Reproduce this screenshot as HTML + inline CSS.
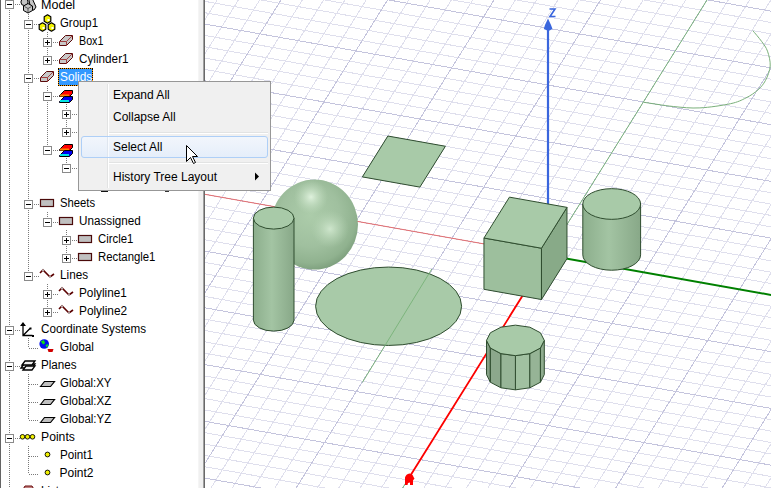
<!DOCTYPE html>
<html><head><meta charset="utf-8"><style>
html,body{margin:0;padding:0;width:771px;height:488px;overflow:hidden;background:#fff}
.t{position:absolute;transform-origin:0 0;font-family:"Liberation Sans",sans-serif;font-size:12px;line-height:18px;color:#000;white-space:nowrap}
.m{position:absolute;left:34px;font-family:"Liberation Sans",sans-serif;font-size:12px;color:#000;white-space:nowrap;line-height:14px}
</style></head><body>
<svg style="position:absolute;left:0;top:0" width="771" height="488" viewBox="0 0 771 488">
<defs><radialGradient id="sph" cx="0.45" cy="0.4" r="0.62"><stop offset="0" stop-color="#acccaa"/><stop offset="0.55" stop-color="#a0c09f"/><stop offset="0.85" stop-color="#90b28f"/><stop offset="1" stop-color="#7c9e7c"/></radialGradient><radialGradient id="sph1" gradientUnits="userSpaceOnUse" cx="311" cy="197" r="17"><stop offset="0" stop-color="#e2f4e0" stop-opacity="0.95"/><stop offset="1" stop-color="#c0dcbe" stop-opacity="0"/></radialGradient><radialGradient id="sph2" gradientUnits="userSpaceOnUse" cx="330" cy="229" r="19"><stop offset="0" stop-color="#d6ecd4" stop-opacity="0.85"/><stop offset="1" stop-color="#b8d6b6" stop-opacity="0"/></radialGradient><linearGradient id="cylg1" x1="0" x2="1" y1="0" y2="0"><stop offset="0" stop-color="#8cae8c"/><stop offset="0.45" stop-color="#a3c4a3"/><stop offset="1" stop-color="#88a888"/></linearGradient><linearGradient id="cylg2" x1="0" x2="1" y1="0" y2="0"><stop offset="0" stop-color="#8cae8c"/><stop offset="0.45" stop-color="#a3c4a3"/><stop offset="1" stop-color="#88a888"/></linearGradient>
<clipPath id="vc"><rect x="205" y="0" width="566" height="488"/></clipPath></defs>
<g clip-path="url(#vc)" shape-rendering="crispEdges"><path d="M240.5 -105.81L1084.2 44.1M234.12 -95.59L1077.82 54.31M221.38 -75.16L1065.08 74.75M215 -64.94L1058.7 84.97M208.63 -54.72L1052.33 95.19M202.26 -44.5L1045.96 105.41M189.51 -24.07L1033.21 125.84M183.14 -13.85L1026.84 136.06M176.77 -3.63L1020.47 146.28M170.39 6.59L1014.09 156.5M157.65 27.02L1001.35 176.93M151.27 37.24L994.97 187.15M144.9 47.46L988.6 197.37M138.53 57.68L982.23 207.59M125.78 78.11L969.48 228.02M119.41 88.33L963.11 238.24M113.04 98.55L956.74 248.46M106.66 108.77L950.36 258.68M93.92 129.2L937.62 279.11M87.54 139.42L931.24 289.33M81.17 149.64L924.87 299.55M74.8 159.86L918.5 309.76M62.05 180.29L905.75 330.2M55.68 190.51L899.38 340.42M49.31 200.73L893.01 350.64M42.93 210.95L886.63 360.86M30.19 231.38L873.89 381.29M23.81 241.6L867.51 391.51M17.44 251.82L861.14 401.73M11.07 262.04L854.77 411.94M-1.68 282.47L842.02 432.38M-8.05 292.69L835.65 442.6M-14.42 302.91L829.28 452.82M-20.8 313.13L822.9 463.04M-33.54 333.56L810.16 483.47M-39.92 343.78L803.78 493.69M-46.29 354L797.41 503.91M-52.66 364.22L791.04 514.12M-65.41 384.65L778.29 534.56M-71.78 394.87L771.92 544.78M-78.15 405.09L765.55 555M-84.53 415.31L759.17 565.21M-97.27 435.74L746.43 585.65M-103.65 445.96L740.05 595.87M259.67 -102.4L-84.47 449.37M278.85 -99L-65.3 452.77M298.02 -95.59L-46.12 456.18M317.2 -92.18L-26.95 459.59M355.55 -85.37L11.4 466.4M374.72 -81.96L30.58 469.81M393.9 -78.56L49.75 473.22M413.07 -75.15L68.93 476.62M451.42 -68.33L107.28 483.44M470.6 -64.93L126.45 486.84M489.77 -61.52L145.63 490.25M508.95 -58.11L164.8 493.66M547.3 -51.3L203.15 500.47M566.47 -47.89L222.33 503.88M585.65 -44.49L241.5 507.29M604.82 -41.08L260.68 510.69M643.17 -34.26L299.03 517.51M662.35 -30.86L318.2 520.91M681.52 -27.45L337.38 524.32M700.7 -24.04L356.55 527.73M739.05 -17.23L394.9 534.54M758.22 -13.82L414.08 537.95M777.4 -10.42L433.25 541.36M796.57 -7.01L452.43 544.76M834.92 -0.19L490.78 551.58M854.1 3.21L509.95 554.99M873.27 6.62L529.13 558.39M892.45 10.03L548.3 561.8M930.8 16.84L586.65 568.61M949.97 20.25L605.83 572.02M969.15 23.65L625 575.43M988.32 27.06L644.18 578.83M1026.67 33.88L682.53 585.65M1045.85 37.28L701.7 589.05M1065.02 40.69L720.88 592.46M1084.2 44.1L740.05 595.87" stroke="#dfdfed" stroke-width="1" fill="none"/><path d="M227.75 -85.37L1071.45 64.53M195.88 -34.29L1039.59 115.62M164.02 16.8L1007.72 166.71M132.15 67.89L975.86 217.8M100.29 118.98L943.99 268.89M68.42 170.07L912.12 319.98M36.56 221.17L880.26 371.07M4.69 272.25L848.39 422.16M-27.17 323.34L816.53 473.25M-59.04 374.44L784.66 524.34M-90.9 425.52L752.8 575.43M240.5 -105.81L-103.65 445.96M336.37 -88.78L-7.77 463M432.25 -71.74L88.1 480.03M528.12 -54.71L183.98 497.07M624 -37.67L279.85 514.1M719.87 -20.64L375.73 531.14M815.75 -3.6L471.6 548.17M911.62 13.43L567.48 565.21M1007.5 30.47L663.35 582.24" stroke="#c4c4dd" stroke-width="1" fill="none"/></g>
<g clip-path="url(#vc)"><line x1="-27.45" y1="153.04" x2="547.8" y2="255.25" stroke="#e87070" stroke-width="1"/><line x1="738.99" y1="-51.29" x2="388.47" y2="510.7" stroke="#80b880" stroke-width="1"/><line x1="547.8" y1="255.25" x2="931.3" y2="323.39" stroke="#008000" stroke-width="2"/><line x1="547.8" y1="255.25" x2="410.78" y2="474.94" stroke="#ff0000" stroke-width="1.8"/><path d="M405 477.5 Q406 474 409.5 473.5 Q413 474 413.5 477 L414.5 478.5 L413 480.5 L413 485 L410 485 L410 482.5 L408 483 L407.5 485 L405 485 Z" fill="#ff0000"/><line x1="548" y1="255" x2="548" y2="28" stroke="#3a66dd" stroke-width="2.2"/><path d="M548 18.5 L551 25 L552.5 29 L548.5 31 L543.8 29 L545 25 Z" fill="#3a66dd"/><path d="M549.5 9 H555 L550 16.5 H555.5" stroke="#3a66dd" stroke-width="1.6" fill="none"/><path d="M644 102.3C648.88 103 663.98 105.57 673.3 106.5C682.62 107.43 690.37 108.37 699.9 107.9C709.43 107.43 722.82 105.37 730.5 103.7C738.18 102.03 741.47 100.17 746 97.9C750.53 95.63 754.45 93.02 757.7 90.1C760.95 87.18 763.42 84.42 765.5 80.4C767.58 76.38 769.87 70.87 770.2 66C770.53 61.13 768.93 55.3 767.5 51.2C766.07 47.1 764.03 44.82 761.6 41.4C759.17 37.98 754.35 32.48 752.9 30.7" stroke="#7ab07a" stroke-width="1" fill="none"/><polygon points="387.86,136.03 445.38,146.25 419.89,187.12 362.37,176.9" fill="#a8caa8" stroke="#2f4d2f" stroke-width="1"/><ellipse cx="388.6" cy="306.25" rx="73" ry="39.2" fill="#a8caa8" stroke="#2f4d2f" stroke-width="1"/><line x1="431.8" y1="269" x2="362.4" y2="382.4" stroke="#7db57d" stroke-width="1"/><ellipse cx="314.5" cy="224.6" rx="43.5" ry="45" fill="url(#sph)"/><ellipse cx="314.5" cy="224.6" rx="43.5" ry="45" fill="url(#sph1)"/><ellipse cx="314.5" cy="224.6" rx="43.5" ry="45" fill="url(#sph2)"/><path d="M253.4 218.1 V320.1 A20.3 11 0 0 0 294 320.1 V218.1 Z" fill="url(#cylg1)" stroke="#2f4d2f" stroke-width="1"/><ellipse cx="273.7" cy="218.1" rx="20.3" ry="11" fill="#a8caa8" stroke="#2f4d2f" stroke-width="1"/><polygon points="483.96,238.01 541.48,248.23 541.48,299.53 483.96,289.31" fill="#9dbf9d" stroke="#2f4d2f" stroke-width="1"/><polygon points="541.48,248.23 566.97,207.36 566.97,258.66 541.48,299.53" fill="#88aa88" stroke="#2f4d2f" stroke-width="1"/><polygon points="509.45,197.14 566.97,207.36 541.48,248.23 483.96,238.01" fill="#a8caa8" stroke="#2f4d2f" stroke-width="1"/><path d="M582.8 204 V254.9 A28.9 15.35 0 0 0 640.6 254.9 V204 Z" fill="url(#cylg2)" stroke="#2f4d2f" stroke-width="1"/><ellipse cx="611.7" cy="204" rx="28.9" ry="15.35" fill="#a8caa8" stroke="#2f4d2f" stroke-width="1"/><polygon points="515.4,355.65 529.85,353.61 529.85,387.81 515.4,389.85" fill="#a1c1a1" stroke="#2f4d2f" stroke-width="1"/><polygon points="529.85,353.61 540.43,348.02 540.43,382.22 529.85,387.81" fill="#96b496" stroke="#2f4d2f" stroke-width="1"/><polygon points="540.43,348.02 544.3,340.4 544.3,374.6 540.43,382.22" fill="#8fac8f" stroke="#2f4d2f" stroke-width="1"/><polygon points="486.5,340.4 490.37,348.02 490.37,382.22 486.5,374.6" fill="#85a085" stroke="#2f4d2f" stroke-width="1"/><polygon points="490.37,348.02 500.95,353.61 500.95,387.81 490.37,382.22" fill="#8ca88c" stroke="#2f4d2f" stroke-width="1"/><polygon points="500.95,353.61 515.4,355.65 515.4,389.85 500.95,387.81" fill="#97b597" stroke="#2f4d2f" stroke-width="1"/><polygon points="515.4,355.65 529.85,353.61 540.43,348.02 544.3,340.4 540.43,332.77 529.85,327.19 515.4,325.15 500.95,327.19 490.37,332.77 486.5,340.4 490.37,348.02 500.95,353.61" fill="#a8caa8" stroke="#2f4d2f" stroke-width="1"/></g>
<rect x="0" y="0" width="205" height="488" fill="#fff"/>
<rect x="0" y="0" width="1" height="488" fill="#646464"/>
<rect x="198" y="0" width="1" height="488" fill="#f5f5f5"/>
<rect x="199" y="0" width="4" height="488" fill="#f0f0f0"/>
<rect x="203" y="0" width="1" height="488" fill="#a0a0a0"/>
<rect x="204" y="0" width="1" height="488" fill="#696969"/>
<g><line x1="9.5" y1="10" x2="9.5" y2="488" stroke="#7a7a7a" stroke-width="1" stroke-dasharray="1 1"/><line x1="28.5" y1="12" x2="28.5" y2="276" stroke="#7a7a7a" stroke-width="1" stroke-dasharray="1 1"/><line x1="47.5" y1="32" x2="47.5" y2="60" stroke="#7a7a7a" stroke-width="1" stroke-dasharray="1 1"/><line x1="47.5" y1="86" x2="47.5" y2="150" stroke="#7a7a7a" stroke-width="1" stroke-dasharray="1 1"/><line x1="66.5" y1="104" x2="66.5" y2="132" stroke="#7a7a7a" stroke-width="1" stroke-dasharray="1 1"/><line x1="66.5" y1="158" x2="66.5" y2="168" stroke="#7a7a7a" stroke-width="1" stroke-dasharray="1 1"/><line x1="85.5" y1="176" x2="85.5" y2="186" stroke="#7a7a7a" stroke-width="1" stroke-dasharray="1 1"/><line x1="47.5" y1="212" x2="47.5" y2="222" stroke="#7a7a7a" stroke-width="1" stroke-dasharray="1 1"/><line x1="66.5" y1="230" x2="66.5" y2="258" stroke="#7a7a7a" stroke-width="1" stroke-dasharray="1 1"/><line x1="47.5" y1="284" x2="47.5" y2="312" stroke="#7a7a7a" stroke-width="1" stroke-dasharray="1 1"/><line x1="28.5" y1="338" x2="28.5" y2="348" stroke="#7a7a7a" stroke-width="1" stroke-dasharray="1 1"/><line x1="28.5" y1="374" x2="28.5" y2="420" stroke="#7a7a7a" stroke-width="1" stroke-dasharray="1 1"/><line x1="28.5" y1="446" x2="28.5" y2="474" stroke="#7a7a7a" stroke-width="1" stroke-dasharray="1 1"/><line x1="15" y1="4.5" x2="20" y2="4.5" stroke="#7a7a7a" stroke-width="1" stroke-dasharray="1 1"/><line x1="34" y1="24.5" x2="39" y2="24.5" stroke="#7a7a7a" stroke-width="1" stroke-dasharray="1 1"/><line x1="53" y1="42.5" x2="58" y2="42.5" stroke="#7a7a7a" stroke-width="1" stroke-dasharray="1 1"/><line x1="53" y1="60.5" x2="58" y2="60.5" stroke="#7a7a7a" stroke-width="1" stroke-dasharray="1 1"/><line x1="34" y1="78.5" x2="39" y2="78.5" stroke="#7a7a7a" stroke-width="1" stroke-dasharray="1 1"/><line x1="53" y1="96.5" x2="58" y2="96.5" stroke="#7a7a7a" stroke-width="1" stroke-dasharray="1 1"/><line x1="72" y1="114.5" x2="77" y2="114.5" stroke="#7a7a7a" stroke-width="1" stroke-dasharray="1 1"/><line x1="72" y1="132.5" x2="77" y2="132.5" stroke="#7a7a7a" stroke-width="1" stroke-dasharray="1 1"/><line x1="53" y1="150.5" x2="58" y2="150.5" stroke="#7a7a7a" stroke-width="1" stroke-dasharray="1 1"/><line x1="72" y1="168.5" x2="77" y2="168.5" stroke="#7a7a7a" stroke-width="1" stroke-dasharray="1 1"/><line x1="86" y1="186.5" x2="96" y2="186.5" stroke="#7a7a7a" stroke-width="1" stroke-dasharray="1 1"/><line x1="34" y1="204.5" x2="39" y2="204.5" stroke="#7a7a7a" stroke-width="1" stroke-dasharray="1 1"/><line x1="53" y1="222.5" x2="58" y2="222.5" stroke="#7a7a7a" stroke-width="1" stroke-dasharray="1 1"/><line x1="72" y1="240.5" x2="77" y2="240.5" stroke="#7a7a7a" stroke-width="1" stroke-dasharray="1 1"/><line x1="72" y1="258.5" x2="77" y2="258.5" stroke="#7a7a7a" stroke-width="1" stroke-dasharray="1 1"/><line x1="34" y1="276.5" x2="39" y2="276.5" stroke="#7a7a7a" stroke-width="1" stroke-dasharray="1 1"/><line x1="53" y1="294.5" x2="58" y2="294.5" stroke="#7a7a7a" stroke-width="1" stroke-dasharray="1 1"/><line x1="53" y1="312.5" x2="58" y2="312.5" stroke="#7a7a7a" stroke-width="1" stroke-dasharray="1 1"/><line x1="15" y1="330.5" x2="20" y2="330.5" stroke="#7a7a7a" stroke-width="1" stroke-dasharray="1 1"/><line x1="29" y1="348.5" x2="39" y2="348.5" stroke="#7a7a7a" stroke-width="1" stroke-dasharray="1 1"/><line x1="15" y1="366.5" x2="20" y2="366.5" stroke="#7a7a7a" stroke-width="1" stroke-dasharray="1 1"/><line x1="29" y1="384.5" x2="39" y2="384.5" stroke="#7a7a7a" stroke-width="1" stroke-dasharray="1 1"/><line x1="29" y1="402.5" x2="39" y2="402.5" stroke="#7a7a7a" stroke-width="1" stroke-dasharray="1 1"/><line x1="29" y1="420.5" x2="39" y2="420.5" stroke="#7a7a7a" stroke-width="1" stroke-dasharray="1 1"/><line x1="15" y1="438.5" x2="20" y2="438.5" stroke="#7a7a7a" stroke-width="1" stroke-dasharray="1 1"/><line x1="29" y1="456.5" x2="39" y2="456.5" stroke="#7a7a7a" stroke-width="1" stroke-dasharray="1 1"/><line x1="29" y1="474.5" x2="39" y2="474.5" stroke="#7a7a7a" stroke-width="1" stroke-dasharray="1 1"/><line x1="15" y1="492.5" x2="20" y2="492.5" stroke="#7a7a7a" stroke-width="1" stroke-dasharray="1 1"/><rect x="5.5" y="0.5" width="8" height="8" fill="#fff" stroke="#8a8a8a" stroke-width="1"/><line x1="7" y1="4.5" x2="12" y2="4.5" stroke="#000" stroke-width="1"/><rect x="24.5" y="20.5" width="8" height="8" fill="#fff" stroke="#8a8a8a" stroke-width="1"/><line x1="26" y1="24.5" x2="31" y2="24.5" stroke="#000" stroke-width="1"/><rect x="43.5" y="38.5" width="8" height="8" fill="#fff" stroke="#8a8a8a" stroke-width="1"/><line x1="45" y1="42.5" x2="50" y2="42.5" stroke="#000" stroke-width="1"/><line x1="47.5" y1="40" x2="47.5" y2="45" stroke="#000" stroke-width="1"/><rect x="43.5" y="56.5" width="8" height="8" fill="#fff" stroke="#8a8a8a" stroke-width="1"/><line x1="45" y1="60.5" x2="50" y2="60.5" stroke="#000" stroke-width="1"/><line x1="47.5" y1="58" x2="47.5" y2="63" stroke="#000" stroke-width="1"/><rect x="24.5" y="74.5" width="8" height="8" fill="#fff" stroke="#8a8a8a" stroke-width="1"/><line x1="26" y1="78.5" x2="31" y2="78.5" stroke="#000" stroke-width="1"/><rect x="43.5" y="92.5" width="8" height="8" fill="#fff" stroke="#8a8a8a" stroke-width="1"/><line x1="45" y1="96.5" x2="50" y2="96.5" stroke="#000" stroke-width="1"/><rect x="62.5" y="110.5" width="8" height="8" fill="#fff" stroke="#8a8a8a" stroke-width="1"/><line x1="64" y1="114.5" x2="69" y2="114.5" stroke="#000" stroke-width="1"/><line x1="66.5" y1="112" x2="66.5" y2="117" stroke="#000" stroke-width="1"/><rect x="62.5" y="128.5" width="8" height="8" fill="#fff" stroke="#8a8a8a" stroke-width="1"/><line x1="64" y1="132.5" x2="69" y2="132.5" stroke="#000" stroke-width="1"/><line x1="66.5" y1="130" x2="66.5" y2="135" stroke="#000" stroke-width="1"/><rect x="43.5" y="146.5" width="8" height="8" fill="#fff" stroke="#8a8a8a" stroke-width="1"/><line x1="45" y1="150.5" x2="50" y2="150.5" stroke="#000" stroke-width="1"/><rect x="62.5" y="164.5" width="8" height="8" fill="#fff" stroke="#8a8a8a" stroke-width="1"/><line x1="64" y1="168.5" x2="69" y2="168.5" stroke="#000" stroke-width="1"/><rect x="24.5" y="200.5" width="8" height="8" fill="#fff" stroke="#8a8a8a" stroke-width="1"/><line x1="26" y1="204.5" x2="31" y2="204.5" stroke="#000" stroke-width="1"/><rect x="43.5" y="218.5" width="8" height="8" fill="#fff" stroke="#8a8a8a" stroke-width="1"/><line x1="45" y1="222.5" x2="50" y2="222.5" stroke="#000" stroke-width="1"/><rect x="62.5" y="236.5" width="8" height="8" fill="#fff" stroke="#8a8a8a" stroke-width="1"/><line x1="64" y1="240.5" x2="69" y2="240.5" stroke="#000" stroke-width="1"/><line x1="66.5" y1="238" x2="66.5" y2="243" stroke="#000" stroke-width="1"/><rect x="62.5" y="254.5" width="8" height="8" fill="#fff" stroke="#8a8a8a" stroke-width="1"/><line x1="64" y1="258.5" x2="69" y2="258.5" stroke="#000" stroke-width="1"/><line x1="66.5" y1="256" x2="66.5" y2="261" stroke="#000" stroke-width="1"/><rect x="24.5" y="272.5" width="8" height="8" fill="#fff" stroke="#8a8a8a" stroke-width="1"/><line x1="26" y1="276.5" x2="31" y2="276.5" stroke="#000" stroke-width="1"/><rect x="43.5" y="290.5" width="8" height="8" fill="#fff" stroke="#8a8a8a" stroke-width="1"/><line x1="45" y1="294.5" x2="50" y2="294.5" stroke="#000" stroke-width="1"/><line x1="47.5" y1="292" x2="47.5" y2="297" stroke="#000" stroke-width="1"/><rect x="43.5" y="308.5" width="8" height="8" fill="#fff" stroke="#8a8a8a" stroke-width="1"/><line x1="45" y1="312.5" x2="50" y2="312.5" stroke="#000" stroke-width="1"/><line x1="47.5" y1="310" x2="47.5" y2="315" stroke="#000" stroke-width="1"/><rect x="5.5" y="326.5" width="8" height="8" fill="#fff" stroke="#8a8a8a" stroke-width="1"/><line x1="7" y1="330.5" x2="12" y2="330.5" stroke="#000" stroke-width="1"/><rect x="5.5" y="362.5" width="8" height="8" fill="#fff" stroke="#8a8a8a" stroke-width="1"/><line x1="7" y1="366.5" x2="12" y2="366.5" stroke="#000" stroke-width="1"/><rect x="5.5" y="434.5" width="8" height="8" fill="#fff" stroke="#8a8a8a" stroke-width="1"/><line x1="7" y1="438.5" x2="12" y2="438.5" stroke="#000" stroke-width="1"/><rect x="5.5" y="488.5" width="8" height="8" fill="#fff" stroke="#8a8a8a" stroke-width="1"/><line x1="7" y1="492.5" x2="12" y2="492.5" stroke="#000" stroke-width="1"/><line x1="9.5" y1="490" x2="9.5" y2="495" stroke="#000" stroke-width="1"/><g transform="translate(20,2)" stroke="#000" stroke-width="1" fill="#c4c4c4" stroke-linejoin="round"><path d="M8.5 -4 L12 -4 L16 5 L14 8 L11 8 Z"/><circle cx="4.5" cy="0" r="3.6"/><path d="M3.5 4 L8 1.5 L12.5 4 L12.5 8.5 L8 11 L3.5 8.5 Z"/><path d="M4.5 4.5 L8 6.5 L11.5 4.5 M8 6.5 V10" fill="none" stroke="#555"/></g><path d="M44.2 16.8 L47.5 14.8 L50.8 16.8 L50.8 21.2 L47.5 23.2 L44.2 21.2 Z" fill="#f2f200" stroke="#000" stroke-width="1.2" stroke-linejoin="round"/><rect x="47.5" y="19" width="2" height="2" fill="#fff"/><path d="M39.2 24.8 L42.5 22.8 L45.8 24.8 L45.8 29.2 L42.5 31.2 L39.2 29.2 Z" fill="#f2f200" stroke="#000" stroke-width="1.2" stroke-linejoin="round"/><rect x="42.5" y="27" width="2" height="2" fill="#fff"/><path d="M48.2 24.8 L51.5 22.8 L54.8 24.8 L54.8 29.2 L51.5 31.2 L48.2 29.2 Z" fill="#f2f200" stroke="#000" stroke-width="1.2" stroke-linejoin="round"/><rect x="51.5" y="27" width="2" height="2" fill="#fff"/><g transform="translate(58,35)"><path d="M1.5 6.5 L7.5 0.5 H14.5 V4.5 L8.5 10.5 H1.5 Z" fill="#c8c8c8" stroke="#5a0a0a" stroke-width="1"/><path d="M1.5 6.5 H8.5 V10.5 M8.5 6.5 L14.5 0.5" fill="none" stroke="#a04040" stroke-width="1"/></g><g transform="translate(58,53)"><path d="M1.5 6.5 L7.5 0.5 H14.5 V4.5 L8.5 10.5 H1.5 Z" fill="#c8c8c8" stroke="#5a0a0a" stroke-width="1"/><path d="M1.5 6.5 H8.5 V10.5 M8.5 6.5 L14.5 0.5" fill="none" stroke="#a04040" stroke-width="1"/></g><g transform="translate(39,71)"><path d="M1.5 6.5 L7.5 0.5 H14.5 V4.5 L8.5 10.5 H1.5 Z" fill="#c8c8c8" stroke="#5a0a0a" stroke-width="1"/><path d="M1.5 6.5 H8.5 V10.5 M8.5 6.5 L14.5 0.5" fill="none" stroke="#a04040" stroke-width="1"/></g><g transform="translate(58,88)" stroke="#000" stroke-width="1"><path d="M1.5 7.5 L6.5 2.5 H14.5 V5.5 L11.5 8.5 H1.5 Z" fill="#ff0000"/><rect x="2" y="6.5" width="9" height="2" fill="#ff8000" stroke="none"/><path d="M1.5 13.5 L6.5 8.5 H14.5 V11.5 L11.5 14.5 H1.5 Z" fill="#0000ee"/><rect x="2" y="12" width="9" height="2" fill="#00e5e5" stroke="none"/></g><g transform="translate(58,142)" stroke="#000" stroke-width="1"><path d="M1.5 7.5 L6.5 2.5 H14.5 V5.5 L11.5 8.5 H1.5 Z" fill="#ff0000"/><rect x="2" y="6.5" width="9" height="2" fill="#ff8000" stroke="none"/><path d="M1.5 13.5 L6.5 8.5 H14.5 V11.5 L11.5 14.5 H1.5 Z" fill="#0000ee"/><rect x="2" y="12" width="9" height="2" fill="#00e5e5" stroke="none"/></g><rect x="40.5" y="199.5" width="13" height="7" fill="#c0c0c0" stroke="#4a0a0a" stroke-width="1.2"/><rect x="59.5" y="217.5" width="13" height="7" fill="#c0c0c0" stroke="#4a0a0a" stroke-width="1.2"/><rect x="78.5" y="235.5" width="13" height="7" fill="#c0c0c0" stroke="#4a0a0a" stroke-width="1.2"/><rect x="78.5" y="253.5" width="13" height="7" fill="#c0c0c0" stroke="#4a0a0a" stroke-width="1.2"/><g transform="translate(39,269)"><path d="M1 4 L4 1 L11 8 L15 5" fill="none" stroke="#5a0000" stroke-width="1.6"/><circle cx="4" cy="1.2" r="1" fill="#bbb"/><circle cx="11" cy="8" r="1" fill="#bbb"/></g><g transform="translate(58,287)"><path d="M1 4 L4 1 L11 8 L15 5" fill="none" stroke="#5a0000" stroke-width="1.6"/><circle cx="4" cy="1.2" r="1" fill="#bbb"/><circle cx="11" cy="8" r="1" fill="#bbb"/></g><g transform="translate(58,305)"><path d="M1 4 L4 1 L11 8 L15 5" fill="none" stroke="#5a0000" stroke-width="1.6"/><circle cx="4" cy="1.2" r="1" fill="#bbb"/><circle cx="11" cy="8" r="1" fill="#bbb"/></g><g transform="translate(18.5,323)" stroke="#000" stroke-width="1.3" fill="none"><path d="M4.5 0.5 V12.5 H14 M4.5 12.5 L11.5 5.5"/><path d="M2.8 2.3 L4.5 0 L6.2 2.3 Z" fill="#000"/><rect x="11" y="4.5" width="2" height="2" fill="#000" stroke="none"/><rect x="13.5" y="12" width="2" height="2" fill="#000" stroke="none"/></g><g transform="translate(39,338)"><circle cx="5.2" cy="6" r="4.8" fill="#0010ee"/><path d="M1.8 3.5 L4.8 2 L6.2 5 L4.2 6.5 Z M6.5 7 L9.5 6 L8 10 Z" fill="#10e010"/><path d="M8.5 11 L14.5 11 L13.5 14 L9.5 14 Z" fill="#d00000"/></g><g transform="translate(20,359)" stroke="#000" stroke-width="1.3" fill="#eee"><path d="M1 9 L4 5 H15 L12 9 Z"/><path d="M2 6 L5 2 H15 L12 6 Z"/><path d="M3 11 L6 7 H15 L12 11 Z"/></g><path d="M40.5 386.5 L44.5 381.5 H54.5 L50.5 386.5 Z" fill="#c0c0c0" stroke="#000" stroke-width="1.2"/><path d="M40.5 404.5 L44.5 399.5 H54.5 L50.5 404.5 Z" fill="#c0c0c0" stroke="#000" stroke-width="1.2"/><path d="M40.5 422.5 L44.5 417.5 H54.5 L50.5 422.5 Z" fill="#c0c0c0" stroke="#000" stroke-width="1.2"/><circle cx="22.5" cy="436.8" r="2.3" fill="#f0f000" stroke="#000" stroke-width="0.9"/><circle cx="27.5" cy="436.8" r="2.3" fill="#f0f000" stroke="#000" stroke-width="0.9"/><circle cx="32.5" cy="436.8" r="2.3" fill="#f0f000" stroke="#000" stroke-width="0.9"/><circle cx="47.5" cy="454.5" r="2.4" fill="#f0f000" stroke="#000" stroke-width="0.9"/><circle cx="47.5" cy="472.5" r="2.4" fill="#f0f000" stroke="#000" stroke-width="0.9"/><path d="M22 491 L25 486 H32 L35 491 Z" fill="#c08080" stroke="#6a0a0a"/></g>
</svg>
<div class="t" style="left:40.5px;top:-4.16px;transform:scaleX(1.045)">Model</div><div class="t" style="left:59.5px;top:13.84px;transform:scaleX(0.949)">Group1</div><div class="t" style="left:78.5px;top:31.84px;transform:scaleX(0.892)">Box1</div><div class="t" style="left:78.5px;top:49.84px;transform:scaleX(0.978)">Cylinder1</div><div style="position:absolute;left:58px;top:68px;width:35px;height:18px;background:#ff9900"><div style="position:absolute;left:0;top:0;width:35px;height:18px;box-sizing:border-box;border:1px dotted #000;background:#3399ff;background-clip:padding-box"></div></div><div class="t" style="left:59.5px;top:67.84px;color:#fff;transform:scaleX(0.984)">Solids</div><div class="t" style="left:59.5px;top:193.84px;transform:scaleX(0.939)">Sheets</div><div class="t" style="left:78.5px;top:211.84px;transform:scaleX(0.974)">Unassigned</div><div class="t" style="left:97.5px;top:229.84px;transform:scaleX(0.947)">Circle1</div><div class="t" style="left:97.5px;top:247.84px;transform:scaleX(0.946)">Rectangle1</div><div class="t" style="left:59.5px;top:265.84px;transform:scaleX(0.978)">Lines</div><div class="t" style="left:78.5px;top:283.84px;transform:scaleX(0.981)">Polyline1</div><div class="t" style="left:78.5px;top:301.84px;transform:scaleX(0.987)">Polyline2</div><div class="t" style="left:40.5px;top:319.84px;transform:scaleX(0.972)">Coordinate Systems</div><div class="t" style="left:59.5px;top:337.84px;transform:scaleX(0.979)">Global</div><div class="t" style="left:40.5px;top:355.84px;transform:scaleX(0.971)">Planes</div><div class="t" style="left:59.5px;top:373.84px;transform:scaleX(0.953)">Global:XY</div><div class="t" style="left:59.5px;top:391.84px;transform:scaleX(0.962)">Global:XZ</div><div class="t" style="left:59.5px;top:409.84px;transform:scaleX(0.962)">Global:YZ</div><div class="t" style="left:40.5px;top:427.84px;transform:scaleX(1.016)">Points</div><div class="t" style="left:59.5px;top:445.84px;transform:scaleX(0.970)">Point1</div><div class="t" style="left:59.5px;top:463.84px;transform:scaleX(1.000)">Point2</div><div class="t" style="left:40.5px;top:481.84px;transform:scaleX(0.957)">Lists</div>
<div style="position:absolute;left:101px;top:191px;width:7px;height:1px;background:#111"></div>
<div style="position:absolute;left:165px;top:191px;width:4px;height:1px;background:#333"></div>
<div style="position:absolute;left:78px;top:81px;width:193px;height:110px;box-sizing:border-box;border:1px solid #979797;background:#f0f0f0">
  <div style="position:absolute;left:28px;top:2px;width:1px;height:104px;background:#e2e3e3"></div>
  <div style="position:absolute;left:29px;top:2px;width:1px;height:104px;background:#fff"></div>
  <div style="position:absolute;left:30px;top:50px;width:159px;height:1px;background:#e2e3e3"></div>
  <div style="position:absolute;left:30px;top:51px;width:159px;height:1px;background:#fff"></div>
  <div style="position:absolute;left:30px;top:80px;width:159px;height:1px;background:#e2e3e3"></div>
  <div style="position:absolute;left:30px;top:81px;width:159px;height:1px;background:#fff"></div>
  <div style="position:absolute;left:2px;top:54px;width:187px;height:22px;box-sizing:border-box;border:1px solid #aecff7;border-radius:3px;background:linear-gradient(#f2f6fc,#e5eefa)"></div>
  <div style="position:absolute;left:28px;top:55px;width:1px;height:20px;background:#dfe6ef"></div>
  <div style="position:absolute;left:29px;top:55px;width:1px;height:20px;background:#f8fbff"></div>
  <div class="m" style="top:6px">Expand All</div>
  <div class="m" style="top:28px">Collapse All</div>
  <div class="m" style="top:58px">Select All</div>
  <div class="m" style="top:88px">History Tree Layout</div>
  <svg style="position:absolute;left:175px;top:90px" width="6" height="9"><path d="M1 0.5 L5 4.5 L1 8.5 Z" fill="#000"/></svg>
</div>
<svg style="position:absolute;left:185px;top:144px" width="14" height="22" viewBox="0 0 14 22">
<path d="M1.5 1.5 V17.5 L5.5 13.5 L8.5 19.5 L10.5 18.5 L7.5 12.5 H12.5 Z" fill="#fff" stroke="#000" stroke-width="1" stroke-linejoin="miter"/>
</svg>
</body></html>
